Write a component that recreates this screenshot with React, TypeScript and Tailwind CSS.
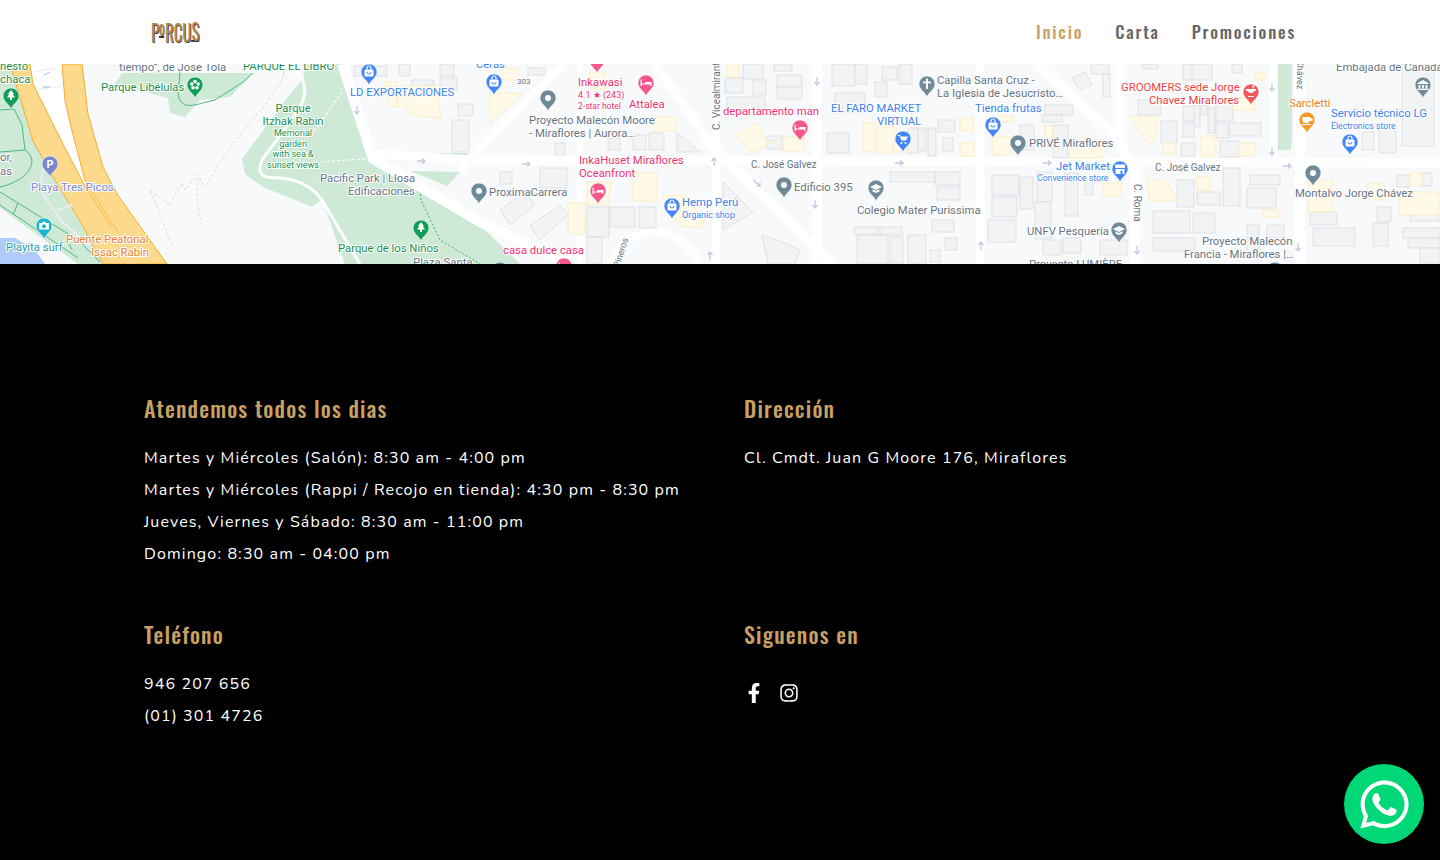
import { FaFacebookF, FaInstagram, FaWhatsapp } from "react-icons/fa";

const G = "#188f4f", B = "#3b82ee", A = "#66747f", P = "#f0306f", R = "#ea4345", O = "#e8822a", V = "#7886cb", T = "#1a9fb0";

type L = [string, number, number, string, number?, string?];
const labels: L[] = [
  ["nesto", 0, 70, G], ["chaca", 0, 83, G], ["or,", 0, 161, A], ["as", 0, 175, A],
  ["tiempo”, de José Tola", 119, 71, A], ["PARQUE EL LIBRO", 243, 70, G], ["Parque Libélulas", 101, 91, G],
  ["Parque", 293, 112, G, 11.2, "middle"], ["Itzhak Rabin", 293, 125, G, 11.2, "middle"],
  ["Memorial", 293, 136, G, 9, "middle"], ["garden", 293, 147, G, 9, "middle"], ["with sea &", 293, 157, G, 9, "middle"], ["sunset views", 293, 168, G, 9, "middle"],
  ["Pacific Park | Llosa", 320, 182, A], ["Edificaciones", 348, 195, A], ["Parque de los Niños", 338, 252, G],
  ["Plaza Santa", 413, 266, A], ["Playa Tres Picos", 31, 191, V], ["Puente Peatonal", 66, 243, O], ["Issac Rabin", 91, 256, O],
  ["Playita surf", 6, 251, T], ["LD EXPORTACIONES", 350, 96, B], ["Ceras", 476, 68, B], ["303", 517, 84, A, 8],
  ["Inkawasi", 578, 86, P], ["4.1 ★ (243)", 578, 98, P, 9], ["2-star hotel", 578, 109, P, 8.5], ["Attalea", 629, 108, P],
  ["Proyecto Malecón Moore", 529, 124, A], ["- Miraflores | Aurora…", 529, 137, A], ["InkaHuset Miraflores", 579, 164, P], ["Oceanfront", 579, 177, P],
  ["ProximaCarrera", 489, 196, A], ["Hemp Perú", 682, 206, B], ["Organic shop", 682, 218, B, 9], ["casa dulce casa", 503, 254, P],
  ["departamento man", 723, 115, P], ["EL FARO MARKET", 831, 112, B], ["VIRTUAL", 877, 125, B], ["C. José Galvez", 751, 168, A, 10],
  ["Edificio 395", 794, 191, A], ["Colegio Mater Purissima", 857, 214, A], ["Capilla Santa Cruz -", 937, 84, A], ["La Iglesia de Jesucristo…", 937, 97, A],
  ["Tienda frutas", 975, 112, B], ["PRIVÉ Miraflores", 1029, 147, A], ["Jet Market", 1056, 170, B], ["Convenience store", 1037, 181, B, 8.7],
  ["C. José Galvez", 1155, 171, A, 10], ["UNFV Pesquería", 1027, 235, A], ["GROOMERS sede Jorge", 1121, 91, R], ["Chavez Miraflores", 1149, 104, R],
  ["Sarcletti", 1289, 107, O], ["Servicio técnico LG", 1331, 117, B], ["Electronics store", 1331, 129, B, 8.7], ["Embajada de Canadá", 1336, 71, A],
  ["Montalvo Jorge Chávez", 1295, 197, A], ["Proyecto Malecón", 1202, 245, A], ["Francia - Miraflores |…", 1184, 258, A], ["Proyecto LUMIÈRE", 1029, 268, A],
];

type Pn = [number, number, string, string?];
const pins: Pn[] = [
  [11, 96, "#0f9d58", "tree"], [421, 228, "#0f9d58", "tree"], [195, 85, "#0f9d58", "flower"], [50, 164, "#7986cb", "P"], [44, 226, "#12b5cb", "cam"],
  [131, 271, "#f9902a", "dot"], [369, 72, "#4285f4", "bag"], [494, 82, "#4285f4", "bag"], [548, 98, "#6f8a99"], [597, 60, "#f4578a", "bed"],
  [646, 83, "#f4578a", "bed"], [800, 128, "#f4578a", "bed"], [903, 139, "#4285f4", "cart"], [927, 84, "#6f8a99", "cross"], [598, 191, "#f4578a", "bed"],
  [479, 191, "#6f8a99"], [672, 206, "#4285f4", "bag"], [784, 185, "#6f8a99"], [876, 188, "#6f8a99", "edu"], [564, 266, "#f4578a", "bed"],
  [500, 270, "#6f8a99"], [993, 125, "#4285f4", "bag"], [1018, 143, "#6f8a99"], [1251, 92, "#ee5a5a", "vet"], [1307, 120, "#f9982a", "cup"],
  [1350, 142, "#4285f4", "bag"], [1423, 85, "#6f8a99", "bank"], [1120, 169, "#4285f4", "store"], [1313, 173, "#6f8a99"], [1119, 230, "#6f8a99", "edu"], [1275, 270, "#6f8a99"],
];

function Pin({ p }: { p: Pn }) {
  const [x, y, c, k] = p;
  return (
    <g transform={`translate(${x} ${y})`}>
      <path d="M0 13 C-1.5 8.5 -8 5.5 -8 0 A8 8 0 1 1 8 0 C8 5.5 1.5 8.5 0 13 Z" fill={c} stroke="#fff" strokeWidth="0.6" />
      {!k && <circle r="3" fill="#fff" />}
      {k === "tree" && <path d="M0 -6 L3 -2 L1.8 -2 L4 1.5 L1 1.5 L1 4 L-1 4 L-1 1.5 L-4 1.5 L-1.8 -2 L-3 -2 Z" fill="#fff" />}
      {k === "flower" && <g fill="#fff"><circle cx="0" cy="-3.4" r="1.8" /><circle cx="3.2" cy="-1" r="1.8" /><circle cx="2" cy="2.8" r="1.8" /><circle cx="-2" cy="2.8" r="1.8" /><circle cx="-3.2" cy="-1" r="1.8" /></g>}
      {k === "P" && <text textAnchor="middle" y="4" fontSize="11" fontWeight="700" fill="#fff" fontFamily="Roboto">P</text>}
      {k === "cam" && <path d="M-5 -3 H-2 L-1 -4.5 H1 L2 -3 H5 V3.5 H-5 Z M0 -1.8 A2 2 0 1 0 0.01 -1.8 Z" fill="#fff" fillRule="evenodd" />}
      {k === "bag" && <g><rect x="-4.5" y="-2.5" width="9" height="7" rx="1" fill="#fff" /><path d="M-2 -2.5 V-4 A2 2 0 0 1 2 -4 V-2.5" fill="none" stroke="#fff" strokeWidth="1.2" /><path d="M-2 0 A2 2 0 0 0 2 0" fill="none" stroke="#4285f4" strokeWidth="1" /></g>}
      {k === "bed" && <path d="M-5.5 -3.5 V3 H-4.3 V1.5 H4.3 V3 H5.5 V-1 H-1 V0.5 H-4.3 V-3.5 Z" fill="#fff" />}
      {k === "cart" && <path d="M-5 -4 H-3 L-2.2 -2.5 H5 L3 1.5 H-1.5 L-3.5 -3 H-5 Z M-1.5 3 A1 1 0 1 0 -1.49 3 Z M2.5 3 A1 1 0 1 0 2.51 3 Z" fill="#fff" />}
      {k === "cross" && <path d="M-1 -5.5 H1 V-2.5 H4 V-0.7 H1 V5 H-1 V-0.7 H-4 V-2.5 H-1 Z" fill="#fff" />}
      {k === "edu" && <path d="M0 -4 L6 -1 L0 2 L-6 -1 Z M-3.5 1.2 L0 3 L3.5 1.2 V3.5 L0 5 L-3.5 3.5 Z" fill="#fff" />}
      {k === "vet" && <path d="M-5 -3 H5 V-1 H3.5 A4 4 0 0 1 -3.5 -1 H-5 Z M-3 4 H3 V5 H-3 Z M1 -6 L4 -7 L2 -3 Z" fill="#fff" />}
      {k === "cup" && <path d="M-4.5 -3 H3 V-1.8 H5.5 V1 H2.8 A3 3 0 0 1 0 3 H-1.5 A3 3 0 0 1 -4.5 0 Z M-5 4 H4 V5 H-5 Z" fill="#fff" />}
      {k === "bank" && <path d="M0 -5 L5.5 -2 V-1 H-5.5 V-2 Z M-4.5 0 H-2.5 V3 H-4.5 Z M-1 0 H1 V3 H-1 Z M2.5 0 H4.5 V3 H2.5 Z M-5.5 3.5 H5.5 V5 H-5.5 Z" fill="#fff" />}
      {k === "store" && <path d="M-5 -4.5 H5 V-1 H-5 Z M-4.5 0 H4.5 V5 H2.5 V1.5 H0.5 V5 H-4.5 Z" fill="#fff" />}
    </g>
  );
}

const bld: [number, number, number, number][] = [
  [354, 66, 12, 10], [373, 66, 14, 10], [399, 64, 11, 12], [412, 80, 22, 8], [427, 85, 7, 25], [440, 78, 17, 12], [458, 104, 15, 12], [452, 120, 17, 32], [440, 64, 14, 12],
  [528, 68, 17, 7], [555, 143, 10, 12], [608, 138, 12, 12], [633, 135, 13, 15], [649, 133, 15, 17],
  [743, 64, 20, 15], [725, 78, 18, 15], [753, 80, 13, 15], [777, 75, 25, 12], [777, 87, 25, 12], [727, 97, 38, 17], [767, 136, 15, 13], [774, 64, 18, 7],
  [832, 64, 23, 22], [855, 64, 12, 20], [882, 67, 15, 13], [899, 64, 13, 20], [875, 82, 12, 15], [835, 93, 30, 20], [827, 133, 22, 20], [938, 120, 17, 12], [908, 128, 10, 25], [918, 128, 8, 23], [928, 128, 8, 28], [943, 138, 10, 13],
  [540, 168, 27, 20], [610, 207, 25, 20], [639, 207, 17, 21], [587, 207, 22, 30], [587, 237, 15, 27], [500, 172, 12, 12], [854, 227, 24, 8], [880, 227, 22, 8], [890, 237, 13, 27], [908, 235, 18, 29], [857, 235, 31, 29], [932, 220, 22, 12], [930, 250, 10, 12], [945, 238, 12, 12], [890, 172, 45, 10], [937, 187, 23, 13], [935, 172, 25, 13],
  [992, 175, 27, 20], [992, 197, 25, 20], [1020, 177, 13, 32], [1037, 172, 15, 30], [1035, 202, 16, 37], [1065, 173, 13, 43], [1085, 180, 8, 15], [1043, 240, 18, 15], [1063, 238, 18, 15], [1100, 240, 27, 15], [988, 220, 28, 22],
  [1177, 180, 17, 27], [1197, 192, 23, 13], [1223, 168, 17, 38], [1250, 175, 30, 10], [1247, 188, 29, 20], [1153, 211, 37, 22], [1193, 213, 22, 20], [1153, 238, 42, 13], [1247, 225, 12, 27], [1267, 225, 17, 13],
  [1138, 100, 23, 15], [1161, 121, 16, 22], [1183, 106, 12, 15], [1183, 123, 11, 14], [1181, 143, 14, 13], [1194, 105, 6, 22], [1201, 105, 7, 10], [1208, 108, 7, 25], [1216, 98, 17, 23], [1216, 123, 13, 15], [1229, 123, 32, 13], [1220, 141, 19, 16], [1142, 64, 16, 5], [1183, 64, 10, 16], [1192, 64, 20, 16], [1232, 64, 10, 9],
  [1045, 105, 28, 10], [1042, 115, 20, 7], [1053, 125, 15, 33], [1020, 125, 14, 25], [1091, 64, 18, 10], [1103, 74, 7, 23],
  [1362, 132, 12, 18], [1379, 128, 17, 25], [1402, 64, 32, 82], [1397, 175, 13, 12], [1422, 173, 10, 13], [1310, 212, 27, 13], [1313, 228, 42, 18], [1373, 223, 15, 23], [1377, 207, 14, 15], [1410, 208, 30, 13], [1403, 228, 37, 10], [1408, 238, 32, 10], [1420, 248, 20, 15],
];
const yel: [number, number, number, number][] = [
  [502, 68, 16, 12], [590, 72, 15, 17], [653, 117, 23, 14], [633, 173, 24, 28], [727, 64, 12, 13], [783, 137, 21, 14],
  [863, 123, 12, 28], [877, 126, 17, 27], [893, 143, 15, 9], [960, 118, 13, 13], [960, 143, 14, 13], [998, 116, 15, 6],
  [992, 137, 18, 18], [1070, 140, 32, 18], [1045, 126, 8, 18], [1163, 143, 13, 11], [1201, 136, 15, 20], [1239, 143, 16, 13], [1233, 98, 22, 12], [1255, 73, 9, 7],
  [1197, 177, 13, 13], [1263, 210, 17, 7], [1103, 183, 18, 13], [1308, 180, 24, 32], [1367, 183, 17, 17], [1399, 192, 41, 23], [1410, 173, 12, 13],
];

function Map() {
  return (
    <svg viewBox="0 64 1440 200" className="block w-full h-[200px] bg-[#f8f9fa]" fontFamily="Roboto, sans-serif">
      <path d="M0 64 H12 L33 141 L53 177 L80 221 L103 264 H78 L0 208 Z" fill="#ceead6" />
      <path d="M0 238 H15 L35 250 L45 264 H0 Z" fill="#aecbfa" />
      <path d="M115 84 L122 73 H253 L230 97 L200 100 L185 117 L170 113 L168 98 Z" fill="#ceead6" />
      <path d="M242 159 L253 144 L290 94 L304 78 L303 64 H342 L373 159 L480 225 L520 264 H345 L322 199 L312 207 L263 187 L245 174 Z" fill="#ceead6" />
      <path d="M407 153 H470 V158 H407 Z M410 171 L460 172 L447 186 Z" fill="#ceead6" />
      <path d="M1278 64 H1292 V140 L1291 150 H1278 Z" fill="#ceead6" />
      <path d="M30 64 L33 84 L63 144 L88 192 L72 131 L65 101 L62 64 Z" fill="#fff" />
      <path d="M34 72 L55 68 M36 90 L62 86" stroke="#e8eaed" strokeWidth="1" fill="none" />
      <path d="M10 64 L33 141 L53 177 L80 221 L103 264 H167 L117 194 L103 167 L88 114 L82 64 H62 L65 101 L72 131 L88 192 L63 144 L33 84 L30 64 Z" fill="#fdd98b" stroke="#f7ad33" strokeWidth="1" />
      <path d="M89 193 L112 228 M92 192 L118 232" stroke="#f7ad33" strokeWidth="0.7" fill="none" />
      <g fill="none" stroke="#4fb87a" strokeWidth="1">
        <path d="M0 110 L14 109 L22 125 L25 150 L0 152" /><path d="M25 150 C40 160 30 180 0 187" /><path d="M0 192 L78 240 L100 262" /><path d="M0 205 L78 258" /><path d="M18 203 L13 215" /><path d="M67 240 L72 250" />
        <path d="M180 72 L178 95 C182 112 196 104 215 100 L243 82 L253 73" />
      </g>
      <path d="M43 168 L40 190 L62 222 L90 246" fill="none" stroke="#e8eaed" strokeWidth="2.5" />
      <path d="M58 210 L72 205" stroke="#e8eaed" strokeWidth="2.5" />
      <path d="M283 64 L302 78 C310 100 302 105 262 160 C256 175 262 178 280 178 C300 180 316 188 325 205 L360 264" fill="none" stroke="#fff" strokeWidth="3" />
      <g fill="none" stroke="#d5d8dc" strokeWidth="1" strokeDasharray="2.5 2.5">
        <path d="M284 72 C285 85 250 120 218 165 L205 188 L198 175 L185 190 L182 183 L170 205 L150 190 L162 220 L172 246" />
        <path d="M198 178 C196 195 198 210 202 228" />
      </g>
      <path d="M342 92 L315 130 L305 140 M322 162 L373 158" fill="none" stroke="#fff" strokeWidth="1.2" strokeDasharray="3 2" />
      <path d="M420 186 L421 200 L440 240 L480 264" fill="none" stroke="#3db36b" strokeWidth="1" strokeDasharray="2 2" />
      <g fill="none" stroke="#fff">
        <path d="M342 64 L373 159 L480 222 L570 264" strokeWidth="10" />
        <path d="M375 154 L470 160 L1440 163" strokeWidth="9" />
        <path d="M460 172 L476 150 L563 64" strokeWidth="8" />
        <path d="M655 64 L713 147 L833 264" strokeWidth="9" />
        <path d="M716 64 V264" strokeWidth="9" />
        <path d="M817 64 V264" strokeWidth="10" />
        <path d="M980 64 V264" strokeWidth="9" />
        <path d="M1120 64 V147 L1135 165 V264" strokeWidth="9" />
        <path d="M1273 64 V160" strokeWidth="8" />
        <path d="M1300 64 V264" strokeWidth="10" />
        <path d="M1037 64 L1127 147" strokeWidth="9" />
        <path d="M580 64 V264" strokeWidth="7" />
        <path d="M610 264 C616 245 640 228 662 232 C680 238 690 246 700 264" strokeWidth="8" />
      </g>
      <g fill="#f1f3f4" stroke="#dadce0" strokeWidth="0.8">
        {bld.map((r, i) => <rect key={i} x={r[0]} y={r[1]} width={r[2]} height={r[3]} />)}
        <path d="M723 182 L753 212 L723 230 Z" /><path d="M677 133 L700 152 H677 Z" /><path d="M762 235 L790 245 L800 250 L795 264 H768 Z" />
        <path d="M1072 78 L1085 72 L1092 85 L1080 90 Z" /><path d="M500 210 L525 192 L535 205 L510 225 Z M530 226 L560 205 L568 215 L540 240 Z" />
      </g>
      <g fill="#fff9e8" stroke="#fcebc2" strokeWidth="0.9">
        {yel.map((r, i) => <rect key={i} x={r[0]} y={r[1]} width={r[2]} height={r[3]} />)}
        <path d="M440 86 H405 V97 H389 V106 H407 V113 L433 118 H441 L438 100 Z M397 82 H384 V87 H397 V108 Z" />
        <path d="M490 93 L523 93 L490 123 Z" />
        <path d="M735 135 L758 122 L765 142 L775 140 L752 153 Z" />
        <path d="M1129 116 L1157 117 L1156 137 L1150 145 L1143 137 Z" />
        <path d="M662 196 L685 195 L704 220 L702 228 L680 226 Z" />
        <path d="M568 203 H586 L584 236 L568 232 Z M587 182 L611 182 L609 205 L587 205 Z" />
        <path d="M1147 180 L1165 180 L1177 198 L1177 201 H1150 Z" />
      </g>
      <g fill="none" stroke="#c5c9e2" strokeWidth="1.3">
        {[[421, 161], [526, 164], [899, 163], [1047, 163], [1287, 166]].map((a, i) => <path key={i} d={`M${a[0] - 4} ${a[1]} h8 m-3 -2.5 l3 2.5 l-3 2.5`} />)}
        {[[817, 81], [815, 204], [1272, 151], [1272, 87], [357, 110], [1137, 250], [1298, 247]].map((a, i) => <path key={i} d={`M${a[0]} ${a[1] - 4} v8 m-2.5 -3 l2.5 3 l2.5 -3`} />)}
        {[[714, 162], [710, 256], [981, 246]].map((a, i) => <path key={i} d={`M${a[0]} ${a[1] + 4} v-8 m-2.5 3 l2.5 -3 l2.5 3`} />)}
        <path d="M753 180 l7 6 m-3.5 0 h3.5 v-3.5" />
        <path d="M50 72 l-6 3 M50 87 h-7" />
      </g>
      <g stroke="#fff" strokeWidth="2" paintOrder="stroke" strokeLinejoin="round">
        {labels.map((l, i) => (
          <text key={i} x={l[1]} y={l[2]} fill={l[3]} fontSize={l[4] ?? 11.3} textAnchor={(l[5] as "middle") ?? "start"}>{l[0]}</text>
        ))}
        <text transform="translate(720 130) rotate(-90)" fill={A} fontSize="10">C. Vicealmirante</text>
        <text transform="translate(1134 184) rotate(90)" fill={A} fontSize="10">C. Roma</text>
        <text transform="translate(1297 60) rotate(90)" fill={A} fontSize="9">Chávez</text>
        <text transform="translate(619 268) rotate(-72)" fill={A} fontSize="9">Pineros</text>
      </g>
      {pins.map((p, i) => <Pin key={i} p={p} />)}
    </svg>
  );
}

const heading = "font-['Oswald',sans-serif] font-medium text-[22px] leading-[32px] tracking-[1.2px] text-[#c9a063]";

export default function App() {
  return (
    <div className="min-h-[860px] bg-black font-['Nunito',sans-serif]">
      <header className="h-16 bg-white flex items-center justify-between pl-[151px] pr-[144px]">
        <div className="w-[50px] h-5">
          <div className="flex items-end w-max origin-left scale-x-[0.73] text-[#b4894f] font-['Oswald',sans-serif] font-normal text-[23px] leading-[20px] h-5 [text-shadow:1px_1px_0_#3a3a3a]">
            <span>P</span>
            <span className="text-[13px] leading-[14px] border-b-2 border-[#3a3a3a] self-start mr-px">O</span>
            <span>R</span><span>C</span><span>U</span>
            <span className="leading-[18px] border-b-2 border-[#3a3a3a]">S</span>
          </div>
        </div>
        <nav className="flex gap-8 font-['Oswald',sans-serif] font-medium text-[17px] leading-[24px] tracking-[1.8px] text-[#666666] -mt-[1px]">
          <a className="text-[#c9a063]">Inicio</a>
          <a>Carta</a>
          <a>Promociones</a>
        </nav>
      </header>
      <Map />
      <footer className="grid grid-cols-[600px_1fr] gap-y-[48px] pl-[144px] pr-[144px] pt-[128px] pb-[100px] text-white text-[16px] leading-[32px] tracking-[1.12px]">
        <section>
          <h4 className={heading}>Atendemos todos los dias</h4>
          <div className="mt-[18px]">
            <p>Martes y Miércoles (Salón): 8:30 am - 4:00 pm</p>
            <p>Martes y Miércoles (Rappi / Recojo en tienda): 4:30 pm - 8:30 pm</p>
            <p>Jueves, Viernes y Sábado: 8:30 am - 11:00 pm</p>
            <p>Domingo: 8:30 am - 04:00 pm</p>
          </div>
        </section>
        <section>
          <h4 className={heading}>Dirección</h4>
          <p className="mt-[18px]">Cl. Cmdt. Juan G Moore 176, Miraflores</p>
        </section>
        <section>
          <h4 className={heading}>Teléfono</h4>
          <div className="mt-[18px]">
            <p>946 207 656</p>
            <p>(01) 301 4726</p>
          </div>
        </section>
        <section>
          <h4 className={heading}>Siguenos en</h4>
          <div className="mt-[33px] flex items-center gap-[15px]">
            <FaFacebookF className="w-5 h-5" />
            <FaInstagram className="w-5 h-5" />
          </div>
        </section>
      </footer>
      <a className="fixed right-4 bottom-4 w-20 h-20 rounded-full bg-[#00d878] flex items-center justify-center text-white">
        <FaWhatsapp className="w-[55px] h-[55px]" />
      </a>
    </div>
  );
}
